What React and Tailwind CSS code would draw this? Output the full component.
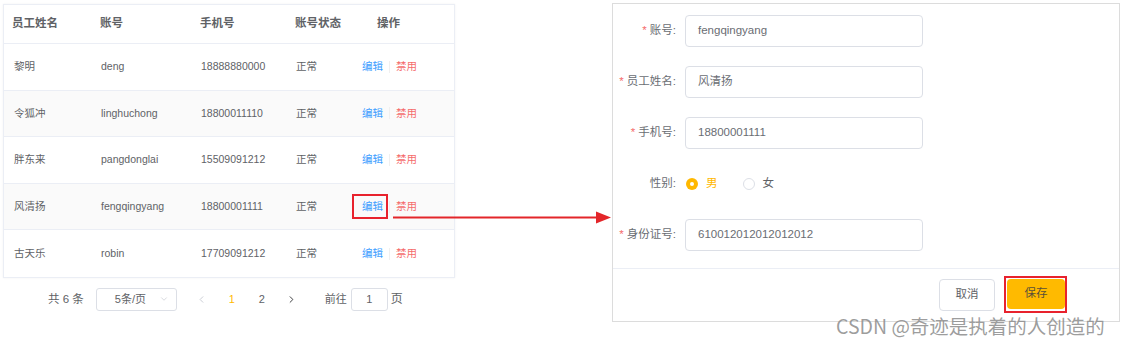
import { ChevronDown, ChevronLeft, ChevronRight } from "lucide-react";

const rows = [
  { name: "黎明", account: "deng", phone: "18888880000" },
  { name: "令狐冲", account: "linghuchong", phone: "18800011110" },
  { name: "胖东来", account: "pangdonglai", phone: "15509091212" },
  { name: "风清扬", account: "fengqingyang", phone: "18800001111" },
  { name: "古天乐", account: "robin", phone: "17709091212" },
];

const fields = [
  { label: "账号", value: "fengqingyang" },
  { label: "员工姓名", value: "风清扬" },
  { label: "手机号", value: "18800001111" },
];

function Label({ text, required = true }) {
  return (
    <div className="flex w-[72px] shrink-0 items-center justify-end pr-[9px] text-[11.5px] text-[#6a6d73]">
      {required ? <span className="mr-[3px] text-[#f56c6c]">*</span> : null}
      {text}:
    </div>
  );
}

function Input({ value }) {
  return (
    <div className="flex h-8 w-[238px] items-center rounded-[4px] border border-[#dcdfe6] px-3 text-[11.5px] text-[#6a6d73]">
      {value}
    </div>
  );
}

export default function App() {
  return (
    <div className="relative h-[346px] w-[1121px] overflow-hidden bg-white font-['Liberation_Sans','Noto_Sans_CJK_SC',sans-serif]">
      <div className="flex items-start">
        {/* employee table */}
        <div className="ml-[3px] w-[452px]">
          <div className="mt-[4px] border border-[#ebeef5] shadow-[0_0_2px_rgba(0,0,0,0.06)]">
            <div className="flex h-[39px] items-center border-b border-[#ebeef5] text-[11.5px] font-semibold text-[#606266]">
              <div className="w-[96px] pl-[8px]">员工姓名</div>
              <div className="w-[100px]">账号</div>
              <div className="w-[95px]">手机号</div>
              <div className="w-[58px]">账号状态</div>
              <div className="flex-1 pl-[24px]">操作</div>
            </div>
            {rows.map((row, i) => (
              <div
                key={row.account}
                className={`flex h-[46.6px] items-center text-[10.5px] text-[#606266] ${
                  i < rows.length - 1 ? "border-b border-[#ebeef5]" : ""
                } ${i % 2 === 1 ? "bg-[#fafafa]" : "bg-white"}`}
              >
                <div className="w-[96px] pl-[10px]">{row.name}</div>
                <div className="w-[100px] pl-[1px]">{row.account}</div>
                <div className="w-[95px] pl-[1px]">{row.phone}</div>
                <div className="w-[58px] pl-[1px]">正常</div>
                <div className="flex flex-1 items-center pl-[9px]">
                  <span className="text-[#409eff]">编辑</span>
                  <span className="mx-[6px] h-[12px] w-px bg-[#f0f0f0]" />
                  <span className="text-[#f56c6c]">禁用</span>
                </div>
              </div>
            ))}
          </div>

          {/* pagination */}
          <div className="mt-[10px] flex h-[23px] items-center text-[11px] text-[#606266]">
            <span className="ml-[45px] text-[11.5px]">共 6 条</span>
            <div className="ml-[12px] flex h-[23px] w-[81px] items-center justify-between rounded-[3px] border border-[#dcdfe6] pl-[18px] pr-[7px]">
              <span>5条/页</span>
              <ChevronDown size={10} strokeWidth={1.5} className="text-[#c0c4cc]" />
            </div>
            <div className="ml-[10px] flex w-[30px] justify-center text-[#c0c4cc]">
              <ChevronLeft size={11} strokeWidth={1.8} />
            </div>
            <div className="flex w-[30px] justify-center text-[#ffba00]">1</div>
            <div className="flex w-[30px] justify-center">2</div>
            <div className="flex w-[30px] justify-center text-[#303133]">
              <ChevronRight size={11} strokeWidth={2} />
            </div>
            <span className="ml-[18px]">前往</span>
            <div className="ml-[4px] flex h-[23px] w-[37px] items-center justify-center rounded-[3px] border border-[#dcdfe6]">
              1
            </div>
            <span className="ml-[3px] text-[12px]">页</span>
          </div>
        </div>

        {/* edit form */}
        <div className="ml-[157px] mt-[3px] w-[508px] border border-[#dcdcdc]">
          <div className="flex flex-col gap-[19px] pb-[17px] pt-[11px]">
            {fields.map((f) => (
              <div key={f.label} className="flex h-8 items-center">
                <Label text={f.label} />
                <Input value={f.value} />
              </div>
            ))}
            <div className="flex h-8 items-center">
              <Label text="性别" required={false} />
              <div className="flex items-center text-[11.5px]">
                <span className="ml-[1px] flex h-[12px] w-[12px] items-center justify-center rounded-full bg-[#ffb800]">
                  <span className="h-[4px] w-[4px] rounded-full bg-white" />
                </span>
                <span className="ml-[8px] text-[#ffb800]">男</span>
                <span className="ml-[25px] h-[12px] w-[12px] rounded-full border border-[#dcdfe6]" />
                <span className="ml-[8px] text-[#606266]">女</span>
              </div>
            </div>
            <div className="flex h-8 items-center">
              <Label text="身份证号" />
              <Input value="610012012012012012" />
            </div>
          </div>
          <div className="flex justify-end gap-[12px] border-t border-[#ebeef5] pb-[10px] pr-[54px] pt-[10px] text-[11.5px]">
            <div className="flex h-8 w-[56px] items-center justify-center rounded-[4px] border border-[#dcdfe6] text-[#606266]">
              取消
            </div>
            <div className="flex h-[30px] w-[58px] items-center justify-center rounded-[4px] bg-[#ffba00] text-[#5a5038]">
              保存
            </div>
          </div>
        </div>
      </div>

      {/* annotations */}
      <div className="absolute left-[352px] top-[194px] h-[25px] w-[36px] border-2 border-[#e8222d]" />
      <div className="absolute left-[1004px] top-[276px] h-[37px] w-[63px] border-2 border-[#e8222d]" />
      <svg className="absolute left-[392px] top-[210px]" width="220" height="15" viewBox="0 0 220 15">
        <line x1="1" y1="7.5" x2="206" y2="7.5" stroke="#e3262a" strokeWidth="2" />
        <polygon points="204,1.5 219,7.5 204,13.5" fill="#e3262a" />
      </svg>
      <div className="absolute left-[836px] top-[312px] text-[19.5px] leading-[28px] text-[#8c8c8c]/85 font-['Noto_Sans_CJK_SC',sans-serif]">
        CSDN @奇迹是执着的人创造的
      </div>
    </div>
  );
}
